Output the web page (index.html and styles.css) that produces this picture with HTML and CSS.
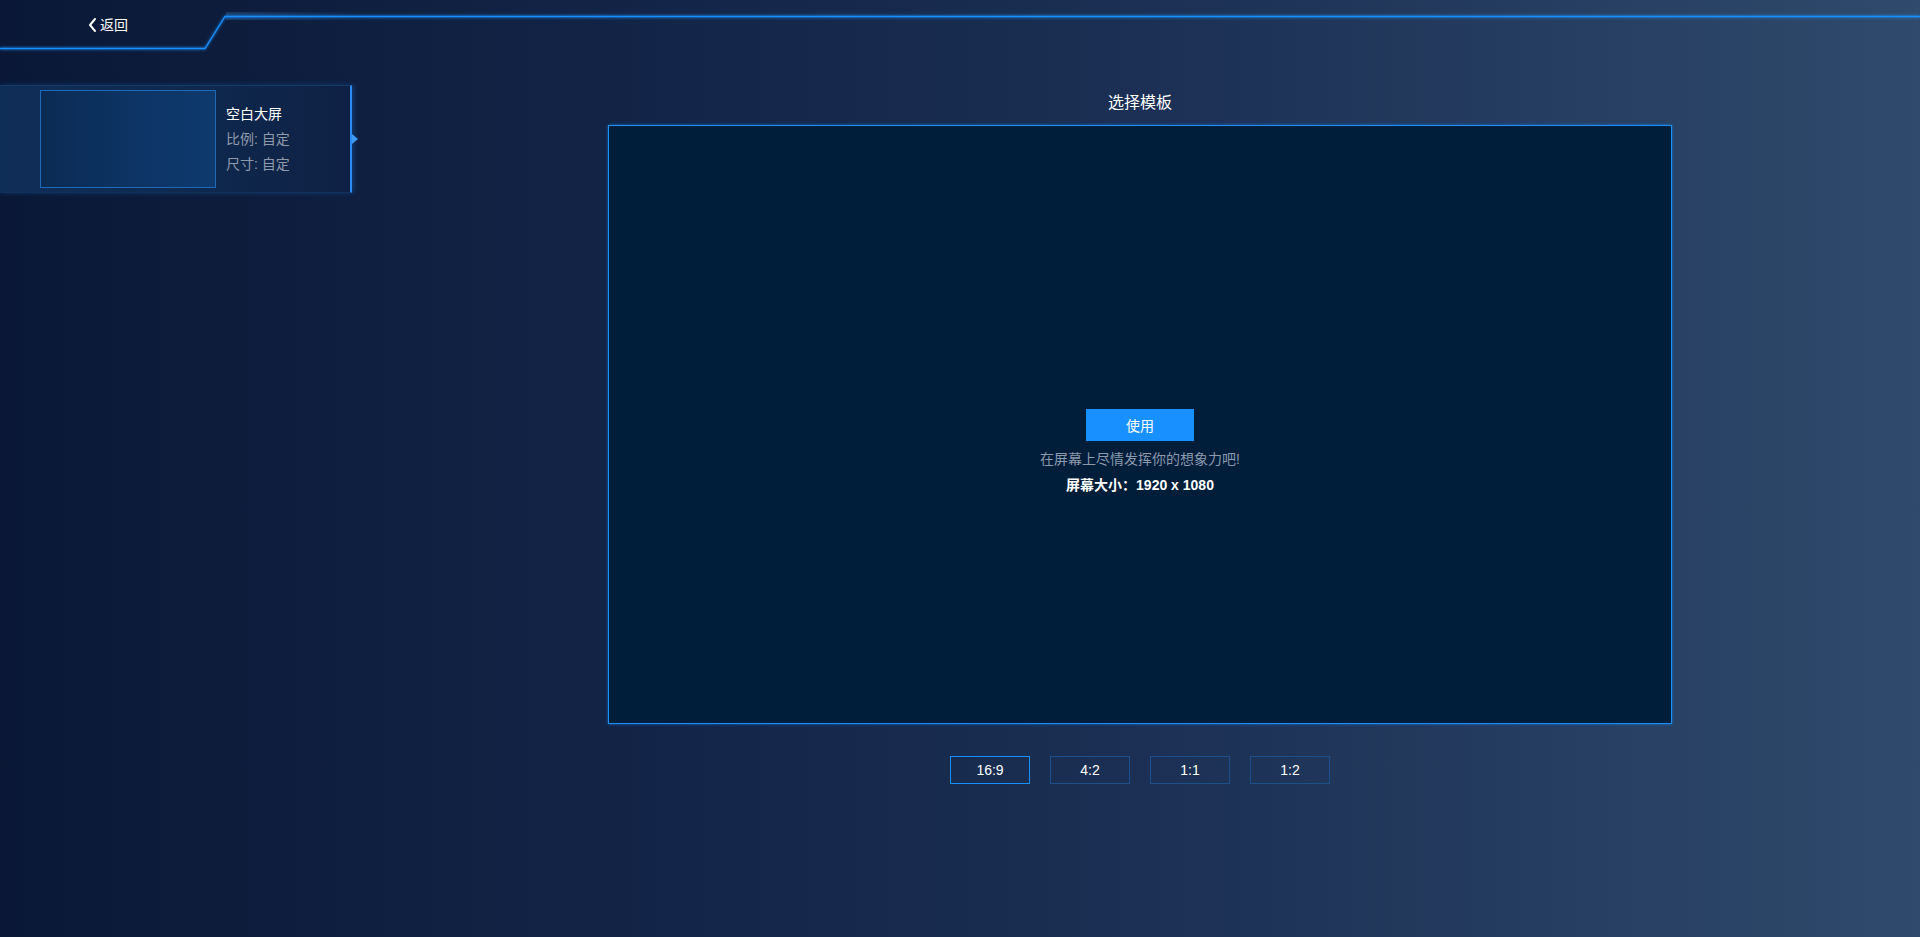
FILE: index.html
```html
<!DOCTYPE html>
<html lang="zh-CN">
<head>
<meta charset="UTF-8">
<title>选择模板</title>
<link rel="stylesheet" href="styles.css">
</head>
<body>
<header class="topbar">
  <svg class="topbar-line" width="1920" height="55" viewBox="0 0 1920 55">
    <defs>
      <filter id="glow" x="-10%" y="-200%" width="120%" height="500%">
        <feGaussianBlur stdDeviation="1.4" result="b"/>
        <feMerge><feMergeNode in="b"/><feMergeNode in="SourceGraphic"/></feMerge>
      </filter>
      <linearGradient id="band" x1="0" x2="1" y1="0" y2="0">
        <stop offset="0" stop-color="#2a6fb0" stop-opacity="0.35"/>
        <stop offset="1" stop-color="#2a6fb0" stop-opacity="0"/>
      </linearGradient>
    </defs>
    <rect x="226" y="12" width="134" height="8" fill="url(#band)"/>
    <polyline points="0,48.5 205,48.5 225,16.5 1920,16.5" fill="none" stroke="#1890ff" stroke-width="1.3" filter="url(#glow)"/>
  </svg>
  <a class="back" href="#">
    <svg class="back-icon" width="11" height="16" viewBox="0 0 11 16"><polyline points="8,2 3,8 8,14" fill="none" stroke="#ffffff" stroke-width="2" stroke-linecap="round" stroke-linejoin="round"/></svg>
    <span>返回</span>
  </a>
</header>
<div class="layout">
  <aside class="sidebar">
    <div class="tpl-card">
      <div class="tpl-thumb"></div>
      <div class="tpl-info">
        <div class="tpl-name">空白大屏</div>
        <div class="tpl-meta">比例: 自定</div>
        <div class="tpl-meta">尺寸: 自定</div>
      </div>
      <span class="tpl-arrow"></span>
    </div>
  </aside>
  <main class="main">
    <h1 class="title">选择模板</h1>
    <div class="preview">
      <button class="use-btn">使用</button>
      <p class="hint">在屏幕上尽情发挥你的想象力吧!</p>
      <p class="size">屏幕大小：1920 x 1080</p>
    </div>
    <div class="ratios">
      <button class="ratio active">16:9</button>
      <button class="ratio">4:2</button>
      <button class="ratio">1:1</button>
      <button class="ratio">1:2</button>
    </div>
  </main>
</div>
</body>
</html>
```
FILE: styles.css
```css
* { box-sizing: border-box; }
html, body { margin: 0; padding: 0; }
body {
  width: 1920px;
  height: 937px;
  overflow: hidden;
  font-family: "Liberation Sans", "Noto Sans CJK SC", sans-serif;
  font-size: 14px;
  color: #fff;
  background: linear-gradient(90deg, #0a1836 0%, #132548 35%, #1b3054 60%, #2f4a6c 100%);
}
.topbar {
  position: relative;
  height: 55px;
  display: flex;
  align-items: flex-start;
}
.topbar-line {
  position: absolute;
  left: 0;
  top: 0;
}
.back {
  position: relative;
  display: flex;
  align-items: center;
  gap: 2px;
  margin: 16px 0 0 87px;
  height: 18px;
  color: #fff;
  text-decoration: none;
  font-size: 14px;
  line-height: 18px;
}
.back-icon { display: block; }
.layout {
  display: flex;
}
.sidebar {
  width: 360px;
  padding-top: 30px;
}
.tpl-card {
  position: relative;
  width: 352px;
  height: 108px;
  padding: 5px 0 5px 40px;
  display: flex;
  align-items: center;
  gap: 10px;
  background: linear-gradient(90deg, #0e2d57 0%, #0f2a50 45%, #0e2144 100%);
  border-top: 1px solid #163a66;
  border-bottom: 1px solid #12315a;
  border-right: 2px solid #2b8bef;
  box-shadow: 2px 0 5px rgba(24, 144, 255, 0.25);
}
.tpl-thumb {
  width: 176px;
  height: 98px;
  border: 1px solid #1e69b8;
  background: linear-gradient(90deg, #0b2b54 0%, #0d3566 60%, #0e3a6e 100%);
}
.tpl-info {
  display: flex;
  flex-direction: column;
  line-height: 25px;
}
.tpl-name { color: #fff; }
.tpl-meta { color: #8f9aab; }
.tpl-arrow {
  position: absolute;
  right: -8px;
  top: 48px;
  width: 0;
  height: 0;
  border-top: 5px solid transparent;
  border-bottom: 5px solid transparent;
  border-left: 6px solid #3d9bff;
}
.main {
  flex: 1;
  display: flex;
  flex-direction: column;
  align-items: center;
  padding-top: 37px;
}
.title {
  margin: 0 0 11px;
  font-size: 16px;
  font-weight: normal;
  line-height: 22px;
  color: #fff;
}
.preview {
  width: 1064px;
  height: 599px;
  border: 1px solid #1890ff;
  box-shadow: 0 0 3px rgba(24, 144, 255, 0.6);
  background: #001d3a;
  display: flex;
  flex-direction: column;
  align-items: center;
  padding-top: 283px;
}
.use-btn {
  width: 108px;
  height: 32px;
  border: none;
  background: #1890ff;
  color: #fff;
  font-family: inherit;
  font-size: 14px;
  padding: 0;
  cursor: pointer;
}
.hint {
  margin: 7px 0 0;
  line-height: 22px;
  color: #8c9aae;
  font-size: 14px;
}
.size {
  margin: 5px 0 0;
  line-height: 20px;
  font-weight: bold;
  font-size: 14px;
  color: #fff;
}
.ratios {
  display: flex;
  gap: 20px;
  margin-top: 32px;
}
.ratio {
  width: 80px;
  height: 28px;
  padding: 0;
  background: transparent;
  border: 1px solid #1c4f8c;
  color: #fff;
  font-family: inherit;
  font-size: 14px;
  cursor: pointer;
}
.ratio.active {
  border-color: #1890ff;
}
```
